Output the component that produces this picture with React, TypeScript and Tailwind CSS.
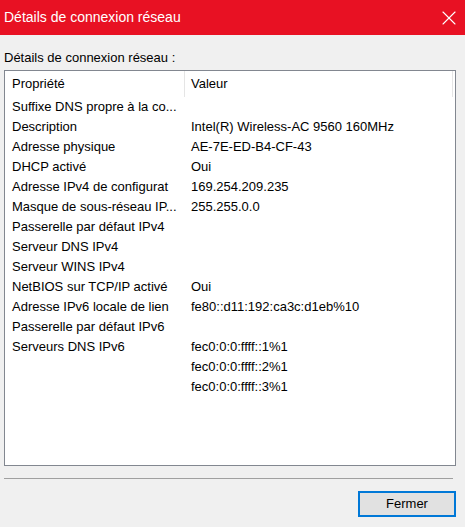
import { X } from "lucide-react";

const rows: [string, string][] = [
  ["Suffixe DNS propre à la co...", ""],
  ["Description", "Intel(R) Wireless-AC 9560 160MHz"],
  ["Adresse physique", "AE-7E-ED-B4-CF-43"],
  ["DHCP activé", "Oui"],
  ["Adresse IPv4 de configurat", "169.254.209.235"],
  ["Masque de sous-réseau IP...", "255.255.0.0"],
  ["Passerelle par défaut IPv4", ""],
  ["Serveur DNS IPv4", ""],
  ["Serveur WINS IPv4", ""],
  ["NetBIOS sur TCP/IP activé", "Oui"],
  ["Adresse IPv6 locale de lien", "fe80::d11:192:ca3c:d1eb%10"],
  ["Passerelle par défaut IPv6", ""],
  ["Serveurs DNS IPv6", "fec0:0:0:ffff::1%1"],
  ["", "fec0:0:0:ffff::2%1"],
  ["", "fec0:0:0:ffff::3%1"],
];

export default function App() {
  return (
    <div className="w-[465px] h-[527px] bg-[#f0f0f0] flex flex-col font-['Liberation_Sans',Arial,sans-serif] text-[13px] text-black">
      {/* Title bar */}
      <div className="h-[35px] bg-[#e81123] flex items-center justify-between pl-[4px] pr-[4px] shrink-0">
        <span className="text-white text-[14px]">Détails de connexion réseau</span>
        <X className="w-[24px] h-[24px] text-white" strokeWidth={1.1} />
      </div>

      {/* Body */}
      <div className="flex flex-col px-[4px] pt-[15px]">
        <div className="h-[16px] leading-[16px]">Détails de connexion réseau :</div>

        <div className="mt-[4px] w-[452px] h-[396px] border border-[#828790] bg-white flex flex-col">
          <div className="h-[26px] flex shrink-0">
            <div className="w-[180px] pl-[7px] flex items-center border-r border-[#e5e5e5]">Propriété</div>
            <div className="w-[268px] pl-[6px] flex items-center border-r border-[#e5e5e5]">Valeur</div>
          </div>
          {rows.map(([k, v], i) => (
            <div key={i} className="h-[20px] flex items-center">
              <div className="w-[180px] pl-[7px] whitespace-nowrap overflow-hidden">{k}</div>
              <div className="pl-[6px] whitespace-nowrap">{v}</div>
            </div>
          ))}
        </div>

        <div className="mt-[12px] w-[449px] h-px bg-[#a0a0a0]" />

        <div className="flex justify-end mt-[12px] pr-[5px]">
          <button className="w-[98px] h-[26px] border-2 border-[#0078d7] bg-[#e1e1e1] text-[13px] flex items-center justify-center">
            Fermer
          </button>
        </div>
      </div>
    </div>
  );
}
